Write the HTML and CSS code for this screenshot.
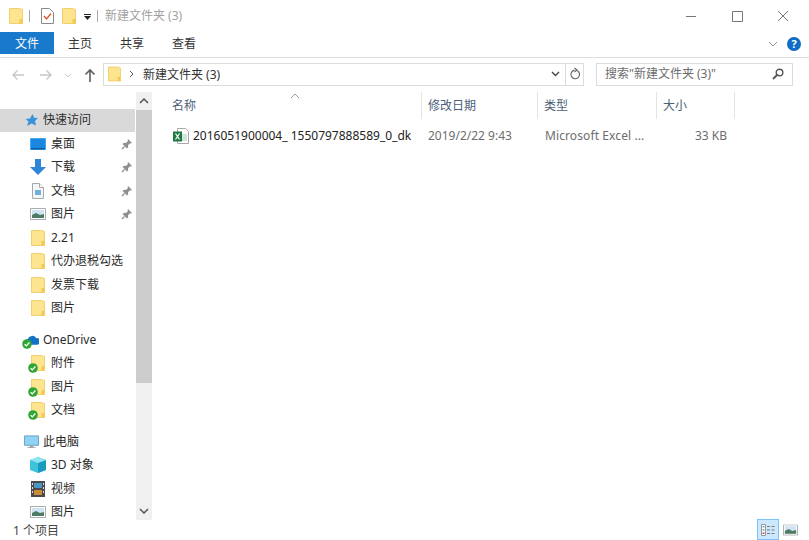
FILE: index.html
```html
<!DOCTYPE html>
<html lang="zh-CN">
<head>
  <meta charset="UTF-8" />
  <title>新建文件夹 (3)</title>
  <link rel="stylesheet" href="styles.css">
</head>
<body>
  <svg class="defs" width="0" height="0">
    <symbol id="folder" viewBox="0 0 14 16">
      <path d="M.5.500h10l3 1v14H.5z" fill="#fde48f" stroke="#f0cf6e"/>
      <path d="M10.500 11h3v4.500h-3z" fill="#f5c94e"/>
    </symbol>
    <symbol id="pin" viewBox="0 0 12 12">
      <path d="M7 1l4 4-1 .6-1-.4-2 2 .2 2L6 10.400 1.600 6 3 4.800l2 .2 2-2-.4-1z" fill="#8a8f94"/>
      <path d="M3.500 8.500L1 11" stroke="#8a8f94" stroke-width="1.200"/>
    </symbol>
    <symbol id="check" viewBox="0 0 10 10">
      <circle cx="5" cy="5" r="4.800" fill="#2fa632"/>
      <path d="M2.600 5.200l1.700 1.700 3.100-3.400" fill="none" stroke="#fff" stroke-width="1.300"/>
    </symbol>
    <symbol id="picture" viewBox="0 0 16 12">
      <path d="M.5.500h15v11H.5z" fill="#fff" stroke="#a9adb0"/>
      <path d="M2 2h12v8H2z" fill="#cfe3f3"/>
      <path d="M2 7l4-2 4 2 4-1v4H2z" fill="#4d7a63"/>
    </symbol>
    <symbol id="doc" viewBox="0 0 12 16">
      <path d="M.5.500h7l4 4v11H.5z" fill="#f4f6f8" stroke="#a5a9ad"/>
      <path d="M7.500.500v4h4" fill="#fff" stroke="#a5a9ad"/>
      <path d="M3 7h6v5H3z" fill="#6fb1dc"/>
    </symbol>
    <symbol id="chev" viewBox="0 0 10 6">
      <path d="M1 5l4-4 4 4" fill="none" stroke="#555" stroke-width="1.500"/>
    </symbol>
  </svg>

  <header class="titlebar">
    <svg class="folder-icon qa-first"><use href="#folder"/></svg>
    <span class="qa-sep"></span>
    <svg class="qa-props" viewBox="0 0 13 16" width="13" height="16">
      <path d="M.5.500h8l4 4v11H.5z" fill="#fff" stroke="#8a8a8a"/>
      <path d="M3 8l2.500 3L10 5.500" fill="none" stroke="#d9552b" stroke-width="1.300"/>
    </svg>
    <svg class="folder-icon qa-new"><use href="#folder"/></svg>
    <svg class="qa-drop" viewBox="0 0 7 6" width="7" height="6">
      <path d="M0 0h7v1H0zM0 2h7L3.500 6z" fill="#222"/>
    </svg>
    <span class="qa-sep"></span>
    <span class="title">新建文件夹 (3)</span>
    <div class="win-btns">
      <svg viewBox="0 0 46 16" width="46" height="16"><path d="M18 8.500h10" stroke="#777"/></svg>
      <svg viewBox="0 0 46 16" width="46" height="16"><path d="M18.500 3.500h10v10h-10z" fill="none" stroke="#777"/></svg>
      <svg viewBox="0 0 46 16" width="46" height="16"><path d="M18 3l10 10M28 3L18 13" stroke="#777"/></svg>
    </div>
  </header>

  <nav class="tabs">
    <span class="tab tab-file">文件</span>
    <span class="tab">主页</span>
    <span class="tab">共享</span>
    <span class="tab">查看</span>
    <div class="ribbon-right">
      <svg viewBox="0 0 10 6" width="10" height="6"><path d="M1 1l4 4 4-4" fill="none" stroke="#8f8f8f"/></svg>
      <span class="help">?</span>
    </div>
  </nav>

  <section class="addressbar">
    <svg class="arrow" viewBox="0 0 14 12" width="14" height="12"><path d="M13 6H2M6.500 1.500L2 6l4.500 4.500" fill="none" stroke="#c6c6c6" stroke-width="1.400"/></svg>
    <svg class="arrow" viewBox="0 0 14 12" width="14" height="12"><path d="M1 6h11M7.500 1.500L12 6l-4.500 4.500" fill="none" stroke="#c6c6c6" stroke-width="1.400"/></svg>
    <svg class="arrow-down" viewBox="0 0 8 5" width="8" height="5"><path d="M1 1l3 3 3-3" fill="none" stroke="#c6c6c6"/></svg>
    <svg class="arrow-up" viewBox="0 0 12 14" width="12" height="14"><path d="M6 14V2M1.500 6.500L6 2l4.500 4.500" fill="none" stroke="#5e5e5e" stroke-width="1.600"/></svg>
    <div class="path-box">
      <svg class="folder-icon path-folder"><use href="#folder"/></svg>
      <svg class="crumb" viewBox="0 0 5 8" width="5" height="8"><path d="M1 1l3 3-3 3" fill="none" stroke="#555"/></svg>
      <span class="path-text">新建文件夹 (3)</span>
      <svg class="path-drop" viewBox="0 0 9 6" width="9" height="6"><path d="M1 1l3.500 3.500L8 1" fill="none" stroke="#444" stroke-width="1.400"/></svg>
      <span class="path-refresh">
        <svg viewBox="0 0 12 14" width="12" height="14"><path d="M8.500 3.800a4.300 4.300 0 1 1-3-.6M5.500 1l2.500 2-2.500 2" fill="none" stroke="#666" stroke-width="1.200"/></svg>
      </span>
    </div>
    <div class="search-box">
      <span>搜索"新建文件夹 (3)"</span>
      <svg viewBox="0 0 12 12" width="12" height="12"><circle cx="7.500" cy="4.500" r="3.300" fill="none" stroke="#555" stroke-width="1.400"/><path d="M5 7l-4 4" stroke="#555" stroke-width="1.800"/></svg>
    </div>
  </section>

  <main class="body">
    <aside class="nav">
      <div class="nav-row level-1 selected">
        <svg class="nav-icon" viewBox="0 0 14 14"><path d="M8 1l1.600 3.800L13.500 5 10.500 8l1 4.500L7 10.500 2.500 13 4 8.500 1 6l4.500-.5z" fill="#3a92d8"/></svg>
        快速访问
      </div>
      <div class="nav-row level-2">
        <svg class="nav-icon wide" viewBox="0 0 16 12"><path d="M.5.500h15v11H.5z" fill="#1b87e0" stroke="#4aa6ea"/><path d="M1 10h14v1.500H1z" fill="#0c5ea8"/></svg>
        桌面<svg class="pin"><use href="#pin"/></svg>
      </div>
      <div class="nav-row level-2">
        <svg class="nav-icon wide" viewBox="0 0 16 16"><path d="M5 0h6v8h5l-8 8-8-8h5z" fill="#2f86d8"/></svg>
        下载<svg class="pin"><use href="#pin"/></svg>
      </div>
      <div class="nav-row level-2">
        <svg class="nav-icon wide"><use href="#doc"/></svg>
        文档<svg class="pin"><use href="#pin"/></svg>
      </div>
      <div class="nav-row level-2">
        <svg class="nav-icon wide"><use href="#picture"/></svg>
        图片<svg class="pin"><use href="#pin"/></svg>
      </div>
      <div class="nav-row level-2"><svg class="nav-icon wide"><use href="#folder"/></svg>2.21</div>
      <div class="nav-row level-2"><svg class="nav-icon wide"><use href="#folder"/></svg>代办退税勾选</div>
      <div class="nav-row level-2"><svg class="nav-icon wide"><use href="#folder"/></svg>发票下载</div>
      <div class="nav-row level-2"><svg class="nav-icon wide"><use href="#folder"/></svg>图片</div>

      <div class="nav-row level-1 group-start">
        <span class="icon-wrap">
          <svg class="nav-icon" viewBox="0 0 16 12"><path d="M4 11a3 3 0 0 1 0-6 5 5 0 0 1 9-1 3.500 3.500 0 0 1 1 7z" fill="#1273c4"/></svg>
          <svg class="badge"><use href="#check"/></svg>
        </span>
        OneDrive
      </div>
      <div class="nav-row level-2">
        <span class="icon-wrap wide"><svg class="nav-icon wide"><use href="#folder"/></svg><svg class="badge"><use href="#check"/></svg></span>附件
      </div>
      <div class="nav-row level-2">
        <span class="icon-wrap wide"><svg class="nav-icon wide"><use href="#folder"/></svg><svg class="badge"><use href="#check"/></svg></span>图片
      </div>
      <div class="nav-row level-2">
        <span class="icon-wrap wide"><svg class="nav-icon wide"><use href="#folder"/></svg><svg class="badge"><use href="#check"/></svg></span>文档
      </div>

      <div class="nav-row level-1 group-start">
        <svg class="nav-icon" viewBox="0 0 16 14"><path d="M.5.500h15v10H.5z" fill="#8fd3f4" stroke="#6b9fc0"/><path d="M6 11h4v1.500H6zM3.500 12.500h9v1h-9z" fill="#9aa5ad"/></svg>
        此电脑
      </div>
      <div class="nav-row level-2">
        <svg class="nav-icon wide" viewBox="0 0 16 16"><path d="M8 0l8 3v10l-8 3-8-3V3z" fill="#3fc3dc"/><path d="M8 6l8-3v10l-8 3z" fill="#1b9bc0"/><path d="M0 3l8 3 8-3-8-3z" fill="#8ce6f2"/></svg>
        3D 对象
      </div>
      <div class="nav-row level-2">
        <svg class="nav-icon wide" viewBox="0 0 16 16"><path d="M1 0h14v16H1z" fill="#4a4a4a"/><path d="M4 2h8v5H4z" fill="#4d93c4"/><path d="M4 9h8v5H4z" fill="#c98a3c"/><path d="M2 2h1v2H2zM2 6h1v2H2zM2 10h1v2H2zM13 2h1v2h-1zM13 6h1v2h-1zM13 10h1v2h-1z" fill="#ddd"/></svg>
        视频
      </div>
      <div class="nav-row level-2">
        <svg class="nav-icon wide"><use href="#picture"/></svg>
        图片
      </div>
    </aside>

    <div class="scrollbar">
      <span class="scroll-btn"><svg viewBox="0 0 10 6" width="10" height="6"><use href="#chev"/></svg></span>
      <span class="scroll-thumb"></span>
      <span class="scroll-track"></span>
      <span class="scroll-btn"><svg class="flip" viewBox="0 0 10 6" width="10" height="6"><use href="#chev"/></svg></span>
    </div>

    <section class="files">
      <svg class="sort-arrow" viewBox="0 0 10 6" width="10" height="6"><path d="M1 5l4-4 4 4" fill="none" stroke="#9a9a9a"/></svg>
      <div class="file-head">
        <span class="col col-name">名称</span>
        <span class="col col-date">修改日期</span>
        <span class="col col-type">类型</span>
        <span class="col col-size">大小</span>
      </div>
      <div class="file-row">
        <span class="cell-name">
          <svg class="xls" viewBox="0 0 16 16" width="16" height="16">
            <path d="M4.500.500h8l3 3v12h-11z" fill="#fff" stroke="#a8a8a8"/>
            <path d="M9 6h5v7H9z" fill="#cfe6d6"/>
            <path d="M0 3.500h9v10H0z" fill="#1e7a45"/>
            <path d="M2.500 5.500l4 6M6.500 5.500l-4 6" stroke="#fff" stroke-width="1.200"/>
          </svg>
          2016051900004_ 1550797888589_0_dk
        </span>
        <span class="cell-date">2019/2/22 9:43</span>
        <span class="cell-type">Microsoft Excel ...</span>
        <span class="cell-size">33 KB</span>
      </div>
    </section>
  </main>

  <footer class="statusbar">
    <span class="status-text">1 个项目</span>
    <div class="view-btns">
      <span class="view-btn active">
        <svg viewBox="0 0 16 14" width="16" height="14"><path d="M1.500 1.500h4v11h-4z" fill="#fff" stroke="#9a9a9a"/><path d="M2.500 3h2v1.500h-2zM2.500 6h2v1.500h-2z" fill="#8aa"/><path d="M2.500 9.500h2V11h-2z" fill="#d84a3a"/><path d="M7 3.500h3M11.500 3.500h3M7 7h3M11.500 7h3M7 10.500h3M11.500 10.500h3" stroke="#7a7a7a"/></svg>
      </span>
      <span class="view-btn">
        <svg viewBox="0 0 16 12" width="15" height="12"><use href="#picture"/></svg>
      </span>
    </div>
  </footer>
</body>
</html>
```

FILE: styles.css
```css
:root {
  --text: #1f1f1f;
  --muted: #6d6d6d;
  --line: #dcdcdc;
  --head: #4c607a;
  --blue: #1979ca;
}

* {
  box-sizing: border-box;
}

html, body {
  height: 100%;
}

body {
  margin: 0;
  width: 809px;
  height: 540px;
  overflow: hidden;
  display: flex;
  flex-direction: column;
  background: #fff;
  color: var(--text);
  font-family: "Noto Sans", "Noto Sans CJK SC", sans-serif;
  font-size: 12px;
  line-height: 16px;
}

svg {
  display: block;
  flex: none;
}

.defs {
  position: absolute;
}

.folder-icon {
  width: 14px;
  height: 16px;
}

/* title bar */
.titlebar {
  height: 32px;
  flex: none;
  display: flex;
  align-items: center;
  padding-left: 9px;
}

.qa-sep {
  width: 1px;
  height: 12px;
  margin-left: 6px;
  background: #a8a8a8;
}

.qa-props {
  margin-left: 11px;
}

.qa-new {
  margin-left: 8px;
}

.qa-drop {
  margin: 2px 0 0 8px;
}

.title {
  margin-left: 7px;
  color: #a2a2a2;
}

.win-btns {
  margin-left: auto;
  margin-right: 3px;
  display: flex;
}

/* tabs */
.tabs {
  height: 26px;
  flex: none;
  display: flex;
  align-items: flex-start;
  border-bottom: 1px solid var(--line);
}

.tab {
  width: 52px;
  height: 22px;
  padding-top: 2px;
  line-height: 20px;
  text-align: center;
  color: #333;
}

.tab-file {
  width: 54px;
  background: var(--blue);
  color: #fff;
}

.ribbon-right {
  margin-left: auto;
  margin-right: 8px;
  display: flex;
  align-items: center;
  gap: 9px;
  height: 24px;
}

.help {
  width: 14px;
  height: 14px;
  border-radius: 50%;
  background: #0f6cc4;
  color: #fff;
  font-size: 11px;
  font-weight: 700;
  line-height: 14px;
  text-align: center;
}

/* address row */
.addressbar {
  height: 34px;
  flex: none;
  display: flex;
  align-items: center;
  padding-left: 11px;
}

.arrow + .arrow {
  margin-left: 14px;
}

.arrow-down {
  margin-left: 11px;
}

.arrow-up {
  margin-left: 12px;
}

.path-box {
  width: 481px;
  height: 23px;
  margin: 0 0 2px 7px;
  display: flex;
  align-items: center;
  border: 1px solid var(--line);
  padding-left: 4px;
}

.path-folder {
  width: 13px;
}

.crumb {
  margin-left: 8px;
}

.path-text {
  margin-left: 9px;
  padding-top: 2px;
  color: #333;
}

.path-drop {
  margin-left: auto;
  margin-right: 5px;
}

.path-refresh {
  width: 18px;
  height: 21px;
  display: flex;
  align-items: center;
  justify-content: center;
  border-left: 1px solid var(--line);
}

.search-box {
  width: 197px;
  height: 23px;
  margin: 0 0 2px 12px;
  padding: 0 8px;
  display: flex;
  align-items: center;
  justify-content: space-between;
  border: 1px solid var(--line);
  color: var(--muted);
}

/* main area */
.body {
  flex: 1;
  min-height: 0;
  display: flex;
}

.nav {
  width: 135px;
  flex: none;
  padding-top: 16.5px;
  overflow: hidden;
}

.nav-row {
  height: 23.5px;
  display: flex;
  align-items: center;
  color: #2b2b2b;
  white-space: nowrap;
}

.level-1 {
  padding-left: 24px;
  gap: 4px;
}

.level-2 {
  padding-left: 30px;
  gap: 5px;
}

.selected {
  background: #d9d9d9;
}

.group-start {
  margin-top: 8px;
}

.nav-icon {
  width: 15px;
  height: 14px;
}

.nav-icon.wide {
  width: 16px;
  height: 16px;
}

.icon-wrap {
  position: relative;
  display: block;
  width: 15px;
  height: 14px;
}

.icon-wrap.wide {
  width: 16px;
  height: 16px;
}

.badge {
  position: absolute;
  left: -2px;
  bottom: -2px;
  width: 10px;
  height: 10px;
}

.pin {
  width: 12px;
  height: 12px;
  margin-left: auto;
  margin-right: 2px;
}

/* nav scrollbar */
.scrollbar {
  width: 16px;
  margin-left: 1px;
  flex: none;
  display: flex;
  flex-direction: column;
  background: #f0f0f0;
}

.scroll-btn {
  height: 18px;
  flex: none;
  display: flex;
  align-items: center;
  justify-content: center;
}

.scroll-thumb {
  height: 273px;
  flex: none;
  background: #cdcdcd;
}

.scroll-track {
  flex: 1;
}

.flip {
  transform: rotate(180deg);
}

/* file list */
.files {
  position: relative;
  flex: 1;
  min-width: 0;
  padding-left: 14px;
}

.sort-arrow {
  position: absolute;
  left: 138px;
  top: 1px;
}

.file-head {
  height: 27px;
  display: flex;
  align-items: stretch;
  color: var(--head);
}

.col {
  padding: 6px 0 0 6px;
  border-right: 1px solid #e5e5e5;
}

.col-name {
  width: 256px;
}

.col-date {
  width: 116px;
}

.col-type {
  width: 119px;
}

.col-size {
  width: 78px;
}

.file-row {
  height: 23px;
  margin-top: 5px;
  display: flex;
  align-items: center;
}

.cell-name {
  width: 256px;
  display: flex;
  align-items: center;
  gap: 4px;
  padding-left: 7px;
  white-space: nowrap;
  color: #222;
}

.cell-date {
  width: 117px;
  padding-left: 6px;
  color: var(--muted);
}

.cell-type {
  width: 119px;
  padding-left: 6px;
  color: var(--muted);
  letter-spacing: 0.1px;
}

.cell-size {
  width: 69px;
  text-align: right;
  color: var(--muted);
}

/* status bar */
.statusbar {
  height: 20px;
  flex: none;
  display: flex;
  align-items: center;
  justify-content: space-between;
  padding: 0 8px 0 13px;
  color: #444;
}

.status-text {
  padding-top: 2px;
}

.view-btns {
  align-self: flex-end;
  display: flex;
  align-items: center;
}

.view-btn {
  width: 22px;
  height: 21px;
  display: flex;
  align-items: center;
  justify-content: center;
}

.view-btn.active {
  background: #cce8ff;
  border: 1px solid #7cc4f5;
}
```
